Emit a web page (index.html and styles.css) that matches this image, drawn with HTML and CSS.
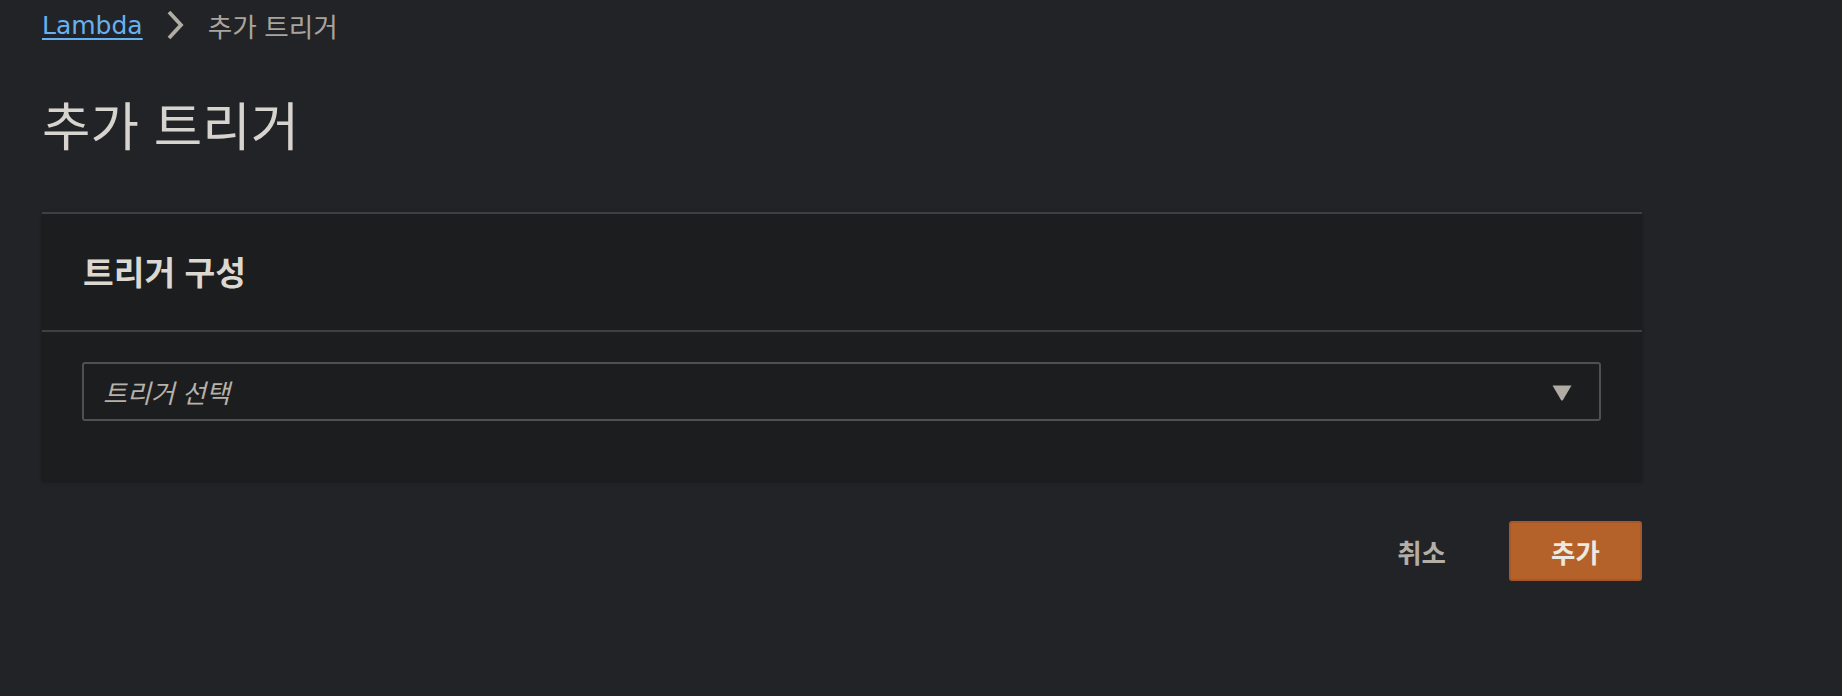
FILE: index.html
```html
<!DOCTYPE html>
<html lang="ko">
<head>
<meta charset="utf-8">
<title>추가 트리거</title>
<link rel="stylesheet" href="styles.css">
</head>
<body>
<div class="page">
  <nav class="crumbs">
    <a class="crumb-link" href="#">Lambda</a>
    <svg class="crumb-sep" width="18" height="30" viewBox="0 0 18 30"><path d="M3 2 L15 15 L3 28" fill="none" stroke="#b1aca4" stroke-width="3.8"/></svg>
    <span class="crumb-current">추가 트리거</span>
  </nav>
  <h1 class="title">추가 트리거</h1>
  <section class="panel">
    <header class="panel-head">
      <h2 class="panel-title">트리거 구성</h2>
    </header>
    <div class="panel-body">
      <div class="select">
        <span class="select-text">트리거 선택</span>
        <svg class="caret" width="20" height="16" viewBox="0 0 20 16"><path d="M0.5 0.5 H19.5 L10.8 15.2 Q10 16 9.2 15.2 Z" fill="#b0aba3"/></svg>
      </div>
    </div>
  </section>
  <div class="actions">
    <button class="btn btn-link">취소</button>
    <button class="btn btn-primary">추가</button>
  </div>
</div>
</body>
</html>
```

FILE: styles.css
```css
html, body {
  margin: 0;
  padding: 0;
  background: #222326;
}
body {
  font-family: "DejaVu Sans", "Noto Sans CJK KR", sans-serif;
  color: #d6d3ce;
}
.page {
  width: 1600px;
  padding-left: 42px;
}
.crumbs {
  display: flex;
  align-items: center;
  height: 36px;
  padding-top: 7px;
  font-size: 25px;
}
.crumb-link {
  color: #66b2f0;
  text-decoration: underline;
  text-underline-offset: 4px;
  text-decoration-thickness: 2px;
}
.crumb-sep {
  margin-left: 23px;
  margin-right: 24px;
}
.crumb-current {
  color: #a9a49d;
  font-family: "Noto Sans CJK KR", sans-serif;
  font-size: 26.7px;
}
.title {
  margin: 0;
  padding-top: 46px;
  height: 169px;
  box-sizing: border-box;
  font-family: "Noto Sans CJK KR", sans-serif;
  font-weight: 400;
  font-size: 52.7px;
  line-height: 68px;
  color: #d7d4cf;
}
.panel {
  background: #1c1d1f;
  border-top: 2px solid #3f4042;
  box-shadow: 0 1px 3px rgba(0, 0, 0, 0.35);
}
.panel-head {
  height: 116px;
  display: flex;
  align-items: center;
  padding-left: 41px;
  border-bottom: 2px solid #3f4042;
}
.panel-title {
  margin: 0;
  font-family: "Noto Sans CJK KR", sans-serif;
  font-weight: 700;
  font-size: 33.4px;
  color: #dbd8d2;
  margin-top: -4px;
}
.panel-body {
  padding: 30px 41px 60px 40px;
}
.select {
  height: 59px;
  box-sizing: border-box;
  border: 2px solid #4c5152;
  border-radius: 3px;
  display: flex;
  align-items: center;
  justify-content: space-between;
  padding: 0 27px 0 19px;
}
.select-text {
  font-family: "Noto Sans CJK KR", sans-serif;
  font-style: italic;
  font-size: 26px;
  color: #b6b1a9;
}
.caret {
  display: block;
  margin-top: 2px;
}
.actions {
  display: flex;
  justify-content: flex-end;
  align-items: center;
  gap: 41px;
  padding-top: 40px;
}
.btn {
  font-family: "Noto Sans CJK KR", sans-serif;
  font-weight: 700;
  font-size: 26.5px;
  border: none;
  cursor: pointer;
}
.btn-link {
  background: transparent;
  color: #b3aea6;
  padding: 0 22px;
  height: 60px;
}
.btn-primary {
  width: 133px;
  height: 60px;
  background: #b4612a;
  color: #ece8e2;
  border: 2px solid #a5592a;
  border-radius: 3px;
}
```
